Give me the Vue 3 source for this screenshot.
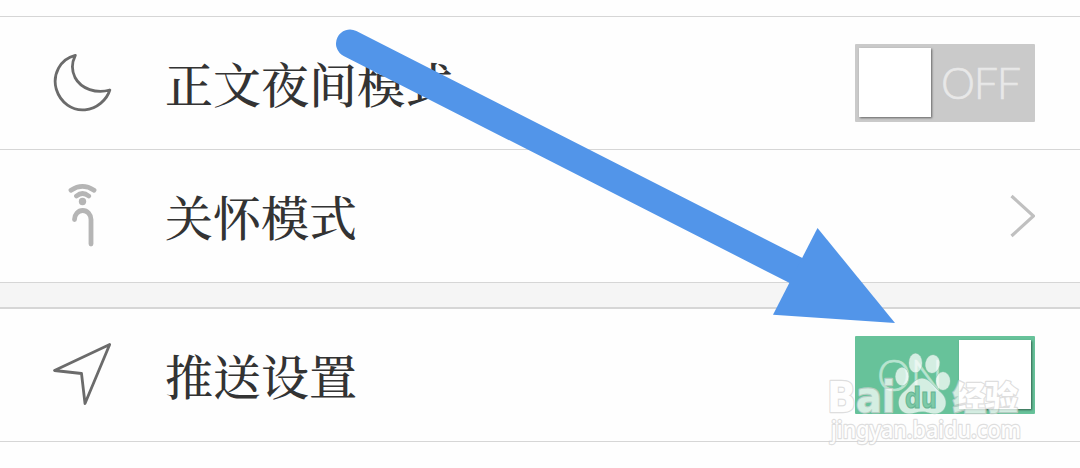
<script setup>
import { ref } from 'vue';

const nightMode = ref(false);
const pushEnabled = ref(true);
</script>

<template>
  <main class="settings">
    <section class="group group--first">
      <div class="row">
        <svg class="row__icon" viewBox="0 0 68 68">
          <path
            class="outline"
            d="M23.300 6.300C8 10 .3 25.500 4.200 40C8.500 54 20.500 62 33 60.800C45 59.800 55 50.500 57.800 41C44.500 45 29 40 23 28.500C19.300 21 20 13 23.300 6.300Z" />
        </svg>
        <span class="row__label">正文夜间模式</span>
        <button
          class="switch"
          :class="{ 'switch--on': nightMode }"
          @click="nightMode = !nightMode">
          <span class="switch__knob"></span>
          <svg class="switch__text" viewBox="0 0 98 72">
            <text x="10" y="50.500" textLength="80">{{ nightMode ? 'ON' : 'OFF' }}</text>
          </svg>
        </button>
      </div>
      <div class="row">
        <svg class="row__icon" viewBox="0 0 68 68">
          <g class="cane">
            <path d="M19 8.200Q30.500 .5 42 8.200M24.500 14Q30.500 9 36.700 14" />
            <path d="M22.500 37.500A8.250 9 0 0 1 39 37.500V62" />
          </g>
          <circle class="cane__dot" cx="30.500" cy="19.500" r="3.700" />
        </svg>
        <span class="row__label">关怀模式</span>
        <svg class="chevron" viewBox="0 0 26 44">
          <path d="M2.500 2L24.500 22L2.500 42" />
        </svg>
      </div>
    </section>

    <section class="group group--second">
      <div class="row">
        <svg class="row__icon" viewBox="0 0 68 68">
          <path class="outline" d="M57.700 3.500L2.500 29.500L29.500 32.500L33 62.500Z" />
        </svg>
        <span class="row__label">推送设置</span>
        <button
          class="switch"
          :class="{ 'switch--on': pushEnabled }"
          @click="pushEnabled = !pushEnabled">
          <span class="switch__knob"></span>
          <svg class="switch__text" viewBox="0 0 98 72">
            <text x="16" y="50.500" textLength="66">{{ pushEnabled ? 'ON' : 'OFF' }}</text>
          </svg>
        </button>
      </div>
    </section>

    <svg class="overlay" viewBox="0 0 1080 468">
      <path class="arrow-line" d="M350 43.500L798 271.500" />
      <path class="arrow-head" d="M817.500 228L895 323L773 314.700Z" />
    </svg>

    <svg class="overlay" viewBox="0 0 1080 468">
      <g class="mark">
        <text class="mark__brand" x="827" y="412" textLength="68" lengthAdjust="spacingAndGlyphs">Bai</text>
        <ellipse cx="902" cy="376.500" rx="6.500" ry="9" />
        <ellipse cx="915.500" cy="363" rx="6.500" ry="9.500" />
        <ellipse cx="932.500" cy="364" rx="7" ry="9" transform="rotate(10 932.500 364)" />
        <ellipse cx="943" cy="381" rx="7" ry="9" />
        <path
          d="M922 378.500C914 378.500 911 387 904 392C896 398 897 413 909 413.500C914 413.500 917 411.500 922 411.500C928 411.500 931 414 936 413.500C947 412.500 949 399 940 392C933 387 930 378.500 922 378.500Z" />
        <text class="mark__cjk" x="953" y="410" textLength="65">经验</text>
        <text class="mark__url" x="831" y="438" textLength="190" lengthAdjust="spacingAndGlyphs">jingyan.baidu.com</text>
      </g>
      <text class="mark__du" x="905" y="407.500" textLength="32" lengthAdjust="spacingAndGlyphs">du</text>
    </svg>
  </main>
</template>

<style>
body {
  margin: 0;
  background: #fefefe;
}
</style>

<style scoped>
.settings {
  position: relative;
  width: 1080px;
  height: 468px;
  box-sizing: border-box;
  padding-top: 16px;
  overflow: hidden;
  background: #fefefe;
}

.group--first {
  border-top: 1px solid #d6d6d6;
}

.group--second {
  border-top: 2px solid #d6d6d6;
}

.group--first::after {
  content: '';
  display: block;
  height: 24px;
  background: #f5f5f5;
}

.row {
  display: flex;
  align-items: center;
  height: 132px;
  padding: 0 45px 0 52px;
  border-bottom: 1px solid #d6d6d6;
}

.row__icon {
  flex: none;
  width: 68px;
  height: 68px;
}

.row__label {
  flex: 1;
  margin-left: 45px;
  font-family: 'Noto Serif CJK SC', 'Noto Sans CJK SC', serif;
  font-size: 48px;
  font-weight: 500;
  line-height: 72px;
  color: #333;
}

.outline {
  fill: none;
  stroke: #6b6b6b;
  stroke-width: 2.8;
  stroke-linejoin: round;
}

.cane {
  fill: none;
  stroke: #b5b5b5;
  stroke-width: 4.8;
  stroke-linecap: round;
}

.cane__dot {
  fill: #b5b5b5;
}

.chevron {
  width: 26px;
  height: 44px;
  fill: none;
  stroke: #c0c0c0;
  stroke-width: 3.2;
}

.switch {
  display: flex;
  width: 180px;
  height: 78px;
  padding: 4px 3px 3px 4px;
  border: none;
  border-radius: 1px;
  background: #cacaca;
  cursor: pointer;
}

.switch--on {
  flex-direction: row-reverse;
  padding: 4px 4px 3px 3px;
  background: #67c29a;
}

.switch__knob {
  width: 72px;
  height: 69px;
  background: #fff;
  box-shadow: 1px 1px 2px rgba(0, 0, 0, 0.5);
}

.switch__text {
  width: 98px;
  height: 72px;
  font-family: Lato, 'Open Sans', sans-serif;
  font-size: 43px;
  font-weight: 300;
  fill: #e8e8e8;
  stroke: #e8e8e8;
  stroke-width: 0.6;
}

.switch--on .switch__text {
  fill: #b8e4d0;
  stroke: #b8e4d0;
}

.overlay {
  position: absolute;
  top: 0;
  left: 0;
  width: 1080px;
  height: 468px;
  pointer-events: none;
}

.arrow-line {
  stroke: #5295e9;
  stroke-width: 28;
  stroke-linecap: round;
}

.arrow-head {
  fill: #5295e9;
}

.mark {
  fill: #fff;
  stroke: #d2d2d2;
  stroke-width: 2.4;
  stroke-linejoin: round;
  paint-order: stroke;
  opacity: 0.72;
}

.mark ellipse,
.mark path {
  stroke: #9ccab5;
  stroke-width: 1.2;
}

.mark__brand {
  font-family: 'DejaVu Sans', sans-serif;
  font-size: 43px;
  font-weight: 700;
}

.mark__du {
  font-family: 'DejaVu Sans', sans-serif;
  font-size: 28px;
  font-weight: 700;
  fill: #7ccaa7;
  stroke: #67b593;
  stroke-width: 1.2;
}

.mark__cjk {
  font-family: 'Noto Sans CJK SC', sans-serif;
  font-size: 33px;
  font-weight: 900;
}

.mark__url {
  font-family: 'Noto Sans', sans-serif;
  font-size: 24px;
  font-weight: 500;
}
</style>
